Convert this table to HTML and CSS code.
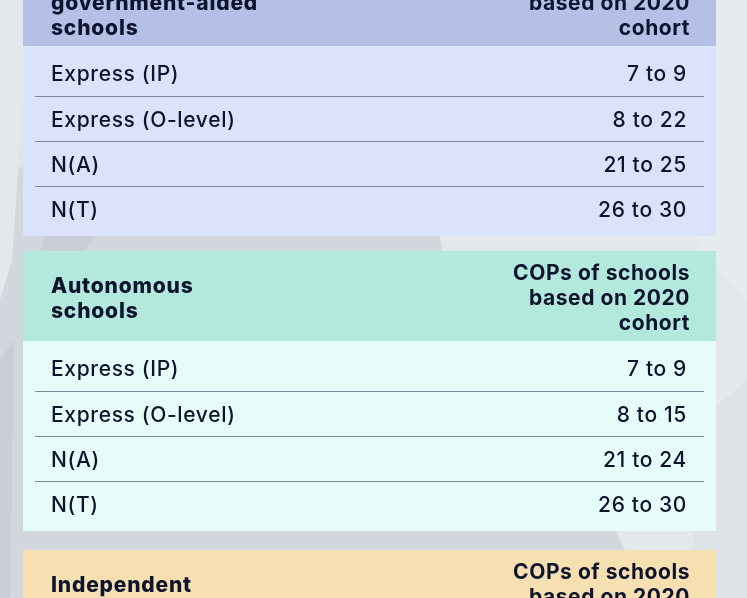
FILE: index.html
```html
<!DOCTYPE html>
<html lang="en">
<head>
<meta charset="utf-8">
<title>COPs by school type</title>
<link rel="stylesheet" href="styles.css">
</head>
<body>
<svg class="backdrop" viewBox="0 0 747 598" preserveAspectRatio="none" aria-hidden="true">
  <rect x="0" y="0" width="747" height="598" fill="#e3e8eb"/>
  <polygon points="0,0 120,0 100,120 0,180" fill="#e0e3e8"/>
  <polygon points="0,180 100,120 430,200 445,260 610,520 630,560 600,598 0,598" fill="#d2d6dd"/>
  <polygon points="45,236 96,236 84,252 40,252" fill="#cbced6"/>
  <polygon points="0,0 30,0 12,260 0,300" fill="#e4e7eb"/>
  <polygon points="0,360 14,340 10,598 0,598" fill="#c8cdd6"/>
  <polygon points="620,0 747,0 747,300 700,250" fill="#e6ebed"/>
  <polygon points="700,420 747,380 747,598 690,598" fill="#dee3e7"/>
</svg>
<main class="page">
  <section class="card card-gov">
    <header class="card-head">
      <h2 class="head-type">Government and government-aided schools</h2>
      <p class="head-cop">COPs of schools based on 2020 cohort</p>
    </header>
    <ul class="rows">
      <li class="row"><span>Express (IP)</span><span>7 to 9</span></li>
      <li class="row"><span>Express (O-level)</span><span>8 to 22</span></li>
      <li class="row"><span>N(A)</span><span>21 to 25</span></li>
      <li class="row"><span>N(T)</span><span>26 to 30</span></li>
    </ul>
  </section>
  <section class="card card-auto">
    <header class="card-head">
      <h2 class="head-type">Autonomous schools</h2>
      <p class="head-cop">COPs of schools based on 2020 cohort</p>
    </header>
    <ul class="rows">
      <li class="row"><span>Express (IP)</span><span>7 to 9</span></li>
      <li class="row"><span>Express (O-level)</span><span>8 to 15</span></li>
      <li class="row"><span>N(A)</span><span>21 to 24</span></li>
      <li class="row"><span>N(T)</span><span>26 to 30</span></li>
    </ul>
  </section>
  <section class="card card-ind">
    <header class="card-head">
      <h2 class="head-type">Independent schools</h2>
      <p class="head-cop">COPs of schools based on 2020 cohort</p>
    </header>
  </section>
</main>
</body>
</html>
```
FILE: styles.css
```css
html, body {
  margin: 0;
  padding: 0;
}
body {
  font-family: Inter, "Liberation Sans", sans-serif;
  color: #0f142e;
  background: #e3e8eb;
  overflow: hidden;
  height: 598px;
}
.backdrop {
  position: fixed;
  left: 0;
  top: 0;
  width: 747px;
  height: 598px;
  z-index: -1;
}
.page {
  display: flex;
  flex-direction: column;
  gap: 15px;
  width: 693px;
  margin: -44px 0 0 23px;
}
.card-ind {
  margin-top: 4px;
}
.card-head {
  display: flex;
  justify-content: space-between;
  align-items: center;
  padding: 9px 26px 6px 28px;
  min-height: 75px;
}
.head-type {
  margin: 0;
  max-width: 220px;
  font-size: 21px;
  line-height: 25px;
  font-weight: 800;
  letter-spacing: 0.8px;
}
.head-cop {
  margin: 0;
  max-width: 190px;
  text-align: right;
  font-size: 21px;
  line-height: 25px;
  font-weight: 700;
  letter-spacing: 0.55px;
}
.card-gov .card-head { background: #b4c0e6; }
.card-gov .rows { background: #dbe2fb; }
.card-auto .card-head { background: #b3e8dc; }
.card-auto .rows { background: #e6fcf8; }
.card-ind .card-head { background: #f6dfb1; }
.rows {
  list-style: none;
  margin: 0;
  padding: 5px 12px;
}
.row {
  display: flex;
  justify-content: space-between;
  align-items: center;
  height: 45px;
  padding: 0 17px 0 16px;
  font-size: 21px;
  font-weight: 450;
  letter-spacing: 0.65px;
}
.row + .row {
  border-top: 1px solid #7b8896;
  height: 44px;
}
```
